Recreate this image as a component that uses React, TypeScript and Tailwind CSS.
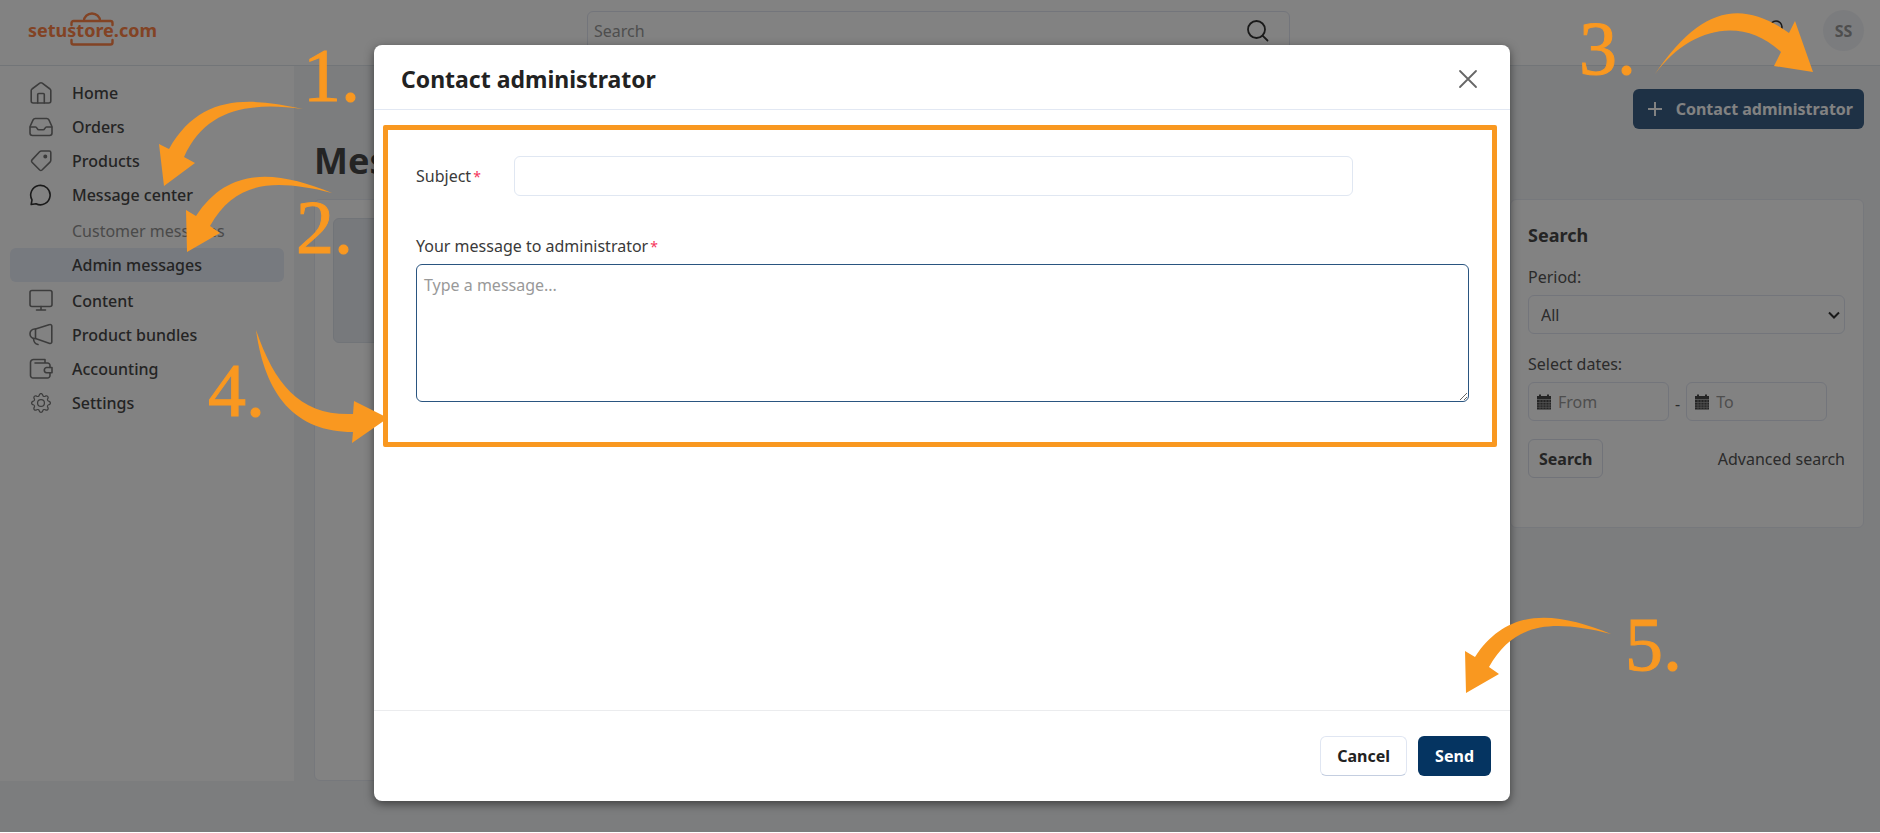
import type { ReactNode } from "react";
import { BsGear } from "react-icons/bs";

function Icon({ children, dark = false }: { children: ReactNode; dark?: boolean }) {
  return (
    <svg
      viewBox="0 0 24 24"
      className={dark ? "size-6 shrink-0 text-[#333]" : "size-6 shrink-0 text-[#777]"}
      fill="none"
      stroke="currentColor"
      strokeWidth="1.6"
      strokeLinecap="round"
      strokeLinejoin="round"
      aria-hidden="true"
    >
      {children}
    </svg>
  );
}

const HomeIcon = (
  <Icon>
    <path d="M2.2 9.6c0-.7.3-1.200.8-1.600L10.800 2.200a2 2 0 0 1 2.400 0L21 8c.5.4.8.9.8 1.600V20a2 2 0 0 1-2 2H4.200a2 2 0 0 1-2-2z" />
    <path d="M8.700 22v-8.500a1 1 0 0 1 1-1h4.600a1 1 0 0 1 1 1V22" />
  </Icon>
);
const InboxIcon = (
  <Icon>
    <path d="M6.300 3.500h11.400a2.500 2.500 0 0 1 2.200 1.400L22.500 10.500c.3.700.5 1.300.5 2V18a2.500 2.500 0 0 1-2.500 2.500h-17A2.500 2.500 0 0 1 1 18v-5.500c0-.7.2-1.300.5-2L4.100 4.900a2.500 2.500 0 0 1 2.200-1.400z" />
    <path d="M1.200 12h5.300c1.700 0 1.500 2.800 3.300 2.800h4.400c1.800 0 1.600-2.800 3.300-2.800h5.300" />
  </Icon>
);
const TagIcon = (
  <Icon>
    <path d="M12.500 2h7.800a1.500 1.500 0 0 1 1.500 1.500v7.800a2.500 2.500 0 0 1-.8 1.800l-8 7.900a1.700 1.700 0 0 1-2.300 0L3 13.200a1.700 1.700 0 0 1 0-2.300L10.600 2.800A2.500 2.500 0 0 1 12.500 2z" />
    <circle cx="16.300" cy="7.500" r="1.200" fill="currentColor" />
  </Icon>
);
const ChatIcon = (
  <Icon dark>
    <path d="M2.200 21.500l.8-4.600A9.700 9.700 0 1 1 7 20.700z" />
  </Icon>
);
const MonitorIcon = (
  <Icon>
    <rect x="1" y="1.500" width="22" height="16" rx="2" />
    <path d="M12 17.500V21M7.500 21h9" />
  </Icon>
);
const MegaphoneIcon = (
  <Icon>
    <path d="M6.500 6 20.800 1.600A1.500 1.500 0 0 1 22.800 3v16a1.500 1.500 0 0 1-2 1.400L6.500 15.500H5.600A4.500 4.500 0 0 1 1 11a4.800 4.800 0 0 1 4.600-5z" />
    <path d="M6.500 6v9.500M4.500 15.500c.2 3 1.500 5.500 4.500 6" />
  </Icon>
);
const WalletIcon = (
  <Icon>
    <path d="M6 6h12.500a2.500 2.500 0 0 1 2.500 2.500v2M21 16v2.500a2.500 2.500 0 0 1-2.500 2.500H4a2.500 2.500 0 0 1-2.500-2.500V5.500A3 3 0 0 1 4.500 2.500H16V6" />
    <path d="M17.500 10.500H23v5.300h-5.500a2.700 2.700 0 0 1 0-5.300z" />
  </Icon>
);
const GearIcon = (
  <span className="flex size-6 shrink-0 items-center justify-center">
    <BsGear className="size-5 text-[#777]" aria-hidden="true" />
  </span>
);

function NavItem({ icon, label }: { icon: ReactNode; label: string }) {
  return (
    <li>
      <a href="#" className="flex h-[34px] items-center gap-[19px] rounded-md pl-[19px] font-medium">
        {icon}
        {label}
      </a>
    </li>
  );
}

function Sidebar() {
  return (
    <nav className="w-[294px] shrink-0 self-stretch bg-white p-2.5 text-base text-[#484848]">
      <ul>
        <NavItem icon={HomeIcon} label="Home" />
        <NavItem icon={InboxIcon} label="Orders" />
        <NavItem icon={TagIcon} label="Products" />
        <NavItem icon={ChatIcon} label="Message center" />
        <li>
          <ul className="my-0.5">
            <li>
              <a href="#" className="flex h-[34px] items-center pl-[62px] text-[#919191]">
                Customer messages
              </a>
            </li>
            <li>
              <a href="#" className="flex h-[34px] items-center rounded-md bg-[#e9eff9] pl-[62px] font-medium">
                Admin messages
              </a>
            </li>
          </ul>
        </li>
        <NavItem icon={MonitorIcon} label="Content" />
        <NavItem icon={MegaphoneIcon} label="Product bundles" />
        <NavItem icon={WalletIcon} label="Accounting" />
        <NavItem icon={GearIcon} label="Settings" />
      </ul>
    </nav>
  );
}

function Logo() {
  return (
    <a href="#" aria-label="setustore.com" className="relative text-lg font-bold text-[#ff8347]">
      setustore.com
      <svg
        viewBox="0 0 44 34"
        className="absolute -top-1 left-[42px] h-[34px] w-11"
        fill="none"
        stroke="currentColor"
        strokeWidth="2.400"
        strokeLinecap="round"
        aria-hidden="true"
      >
        <path d="M1.500 13v-2a2 2 0 0 1 2-2h37a2 2 0 0 1 2 2v2M1.500 28v2.500a2 2 0 0 0 2 2h37a2 2 0 0 0 2-2V28M14 9a8 7.500 0 0 1 16 0" />
      </svg>
    </a>
  );
}

function TopBar() {
  return (
    <header className="flex h-[66px] items-start justify-between border-b border-[#dfe5ec] bg-white pr-4 pl-7">
      <div className="flex w-[559px] shrink-0 pt-4">
        <Logo />
      </div>
      <label className="mt-[11px] flex h-10 w-full max-w-[703px] items-center rounded-md border border-[#e2e6f2] pr-5 pl-1.5">
        <input aria-label="Search" placeholder="Search" className="min-w-0 flex-1 placeholder:text-[#999]" />
        <svg viewBox="0 0 22 22" className="size-[22px] text-[#333]" fill="none" stroke="currentColor" strokeWidth="1.800" strokeLinecap="round" aria-hidden="true">
          <circle cx="9.500" cy="9.500" r="8.500" />
          <path d="m15.800 15.800 4.700 4.700" />
        </svg>
      </label>
      <div className="flex flex-1 items-center justify-end gap-[35px] pt-2.5">
        <svg viewBox="0 0 24 24" className="size-6 text-[#333]" fill="none" stroke="currentColor" strokeWidth="1.600" aria-hidden="true">
          <circle cx="12" cy="8" r="6" />
          <path d="M5 21c1-4 4-6 7-6s6 2 7 6" />
        </svg>
        <button type="button" className="size-[41px] rounded-full bg-[#f2f4f8] font-bold text-[#999]">
          SS
        </button>
      </div>
    </header>
  );
}

function DateField({ label }: { label: string }) {
  return (
    <label className="flex h-[39px] w-[141px] items-center gap-1.5 rounded-md border border-[#e2e6f2] px-[7px]">
      <svg viewBox="0 0 16 16" className="size-4 shrink-0" aria-hidden="true">
        <path fill="#4a4a4a" d="M1 2h2V.5h2V2h6V.5h2V2h2v3.500H1z" />
        <path fill="#4a4a4a" d="M1 6h14v9.500H1z" />
        <path stroke="#aaa" strokeWidth=".7" d="M1 8.500h14M1 11h14M1 13.300h14M4 6v9.500M7 6v9.500M10 6v9.500M13 6v9.500" />
      </svg>
      <input aria-label={label} placeholder={label} className="w-full min-w-0 placeholder:text-[#999]" />
    </label>
  );
}

function SearchCard() {
  return (
    <aside className="flex h-[329px] w-[354px] shrink-0 flex-col rounded-md border border-[#e8ebf4] bg-white pr-[18px] pl-[17px] pt-[23px] text-base text-[#555]">
      <h2 className="text-lg leading-6 font-bold text-[#484848]">Search</h2>
      <label htmlFor="period" className="mt-[18px] leading-6">
        Period:
      </label>
      <div className="relative mt-1.5 flex">
        <select id="period" className="h-[39px] flex-1 appearance-none rounded-md border border-[#e2e6f2] px-3">
          <option>All</option>
        </select>
        <svg viewBox="0 0 12 8" className="pointer-events-none absolute top-4 right-[5px] h-2 w-3" fill="none" stroke="#333" strokeWidth="2" aria-hidden="true">
          <path d="m1 1.500 5 5 5-5" />
        </svg>
      </div>
      <p className="mt-[18px] leading-6">Select dates:</p>
      <div className="mt-1.5 flex items-center gap-1.5">
        <DateField label="From" />
        <span className="pt-1">-</span>
        <DateField label="To" />
      </div>
      <div className="mt-[18px] flex items-center justify-between">
        <button type="button" className="h-[39px] rounded-md border border-[#dde2ee] px-2.5 font-bold text-[#484848]">
          Search
        </button>
        <a href="#">Advanced search</a>
      </div>
    </aside>
  );
}

function Page() {
  return (
    <div className="flex h-full flex-col bg-[#f3f5f8]">
      <TopBar />
      <div className="mb-[51px] flex flex-1">
        <Sidebar />
        <main className="flex flex-1 flex-col pt-[23px] pr-4 pl-5">
          <div className="flex h-[110px] items-start justify-between">
            <h1 className="mt-12 text-4xl leading-[48px] font-bold text-[#484848]">Messages</h1>
            <button
              type="button"
              className="flex h-10 items-center gap-2.5 rounded-md bg-[#3b6087] px-[11px] font-bold whitespace-nowrap text-white"
            >
              <svg viewBox="0 0 22 22" className="size-[22px]" stroke="currentColor" strokeWidth="2" aria-hidden="true">
                <path d="M4 11h14M11 4v14" />
              </svg>
              Contact administrator
            </button>
          </div>
          <div className="flex flex-1 gap-5">
            <section className="flex-1 rounded-md border border-[#e8ebf4] bg-white p-[18px]">
              <div className="h-[125px] rounded-md border border-[#dde3ec] bg-[#eaeef4]" />
            </section>
            <SearchCard />
          </div>
        </main>
      </div>
    </div>
  );
}

function Required() {
  return <span className="ml-0.5 text-sm leading-4 text-[#f5365c]">*</span>;
}

function ContactDialog() {
  return (
    <div
      role="dialog"
      aria-modal="true"
      aria-labelledby="dialog-title"
      className="mt-[45px] mb-[31px] ml-1 flex w-full max-w-[1136px] flex-col rounded-lg bg-white text-base text-[#3a3a3a] shadow-[0_3px_10px_rgba(0,0,0,0.5)]"
    >
      <header className="flex h-[65px] items-center justify-between border-b border-[#e2e8f3] pt-1 pr-8 pl-[27px]">
        <h2 id="dialog-title" className="text-[23px] font-bold text-[#222]">
          Contact administrator
        </h2>
        <button type="button" aria-label="Close">
          <svg viewBox="0 0 20 20" className="size-5 text-[#666]" stroke="currentColor" strokeWidth="1.800" strokeLinecap="round">
            <path d="m2 2 16 16M18 2 2 18" />
          </svg>
        </button>
      </header>
      <form id="contact" className="mt-[15px] mr-[13px] mb-auto ml-[9px] flex flex-col rounded-xs border-5 border-[#f99820] pt-[26px] pr-[23px] pb-10 pl-7">
        <div className="flex items-center">
          <label htmlFor="subject" className="w-[98px] shrink-0">
            Subject
            <Required />
          </label>
          <input id="subject" className="h-10 w-full max-w-[839px] rounded-md border border-[#e0e7f2] px-3" />
        </div>
        <label htmlFor="message" className="mt-[38px] leading-6">
          Your message to administrator
          <Required />
        </label>
        <textarea
          id="message"
          placeholder="Type a message..."
          className="mt-1.5 h-[138px] rounded-md border border-[#2a5580] px-[7px] py-2 placeholder:text-[#999]"
        />
      </form>
      <footer className="flex h-[91px] items-center justify-end gap-[11px] border-t border-[#ebecee] pr-[19px] font-bold">
        <button type="button" className="h-10 rounded-md border border-[#e0e6f2] border-b-[#c4cee0] px-4 text-[#222]">
          Cancel
        </button>
        <button type="submit" form="contact" className="h-10 rounded-md bg-[#053461] px-[17px] text-white">
          Send
        </button>
      </footer>
    </div>
  );
}

function Callouts() {
  const digit = "absolute text-[76px] leading-[76px] [-webkit-text-stroke:1px_#f99820]";
  return (
    <div className="pointer-events-none absolute inset-0 font-['Liberation_Serif',serif] text-[#f99820]">
      <svg viewBox="0 0 1880 833" className="absolute top-0 left-0 h-[833px] w-[1880px]" fill="currentColor" aria-hidden="true">
        <path d="M303 109C245 96 199 96 169 149L159 144L164 186L195 163L184 157C206 108 250 102 303 109Z" />
        <path id="arrow" d="M332 193C280 172 230 164 196 216L186 210L187 252L220 233L210 226C236 180 275 179 332 193Z" />
        <path d="M1655 74C1700 8 1740-2 1789 33L1795 21L1813 72L1774 66L1781 52C1742 15 1689 28 1655 74Z" />
        <path d="M256 330C265 395 295 432 353 432L352 443L388 418L354 401L353 414C300 416 275 385 256 330Z" />
        <use href="#arrow" x="1279" y="441" />
      </svg>
      <span className={`${digit} top-[37px] left-[303px]`}>1.</span>
      <span className={`${digit} top-[189px] left-[296px]`}>2.</span>
      <span className={`${digit} top-[10px] left-[1579px]`}>3.</span>
      <span className={`${digit} top-[352px] left-[208px]`}>4.</span>
      <span className={`${digit} top-[606px] left-[1625px]`}>5.</span>
    </div>
  );
}

export default function App() {
  return (
    <div className="relative h-screen min-h-[833px] overflow-hidden border-b border-white bg-white font-['Noto_Sans','Open_Sans',sans-serif]">
      <Page />
      <div className="absolute inset-0 flex justify-center bg-black/49">
        <ContactDialog />
      </div>
      <Callouts />
    </div>
  );
}
